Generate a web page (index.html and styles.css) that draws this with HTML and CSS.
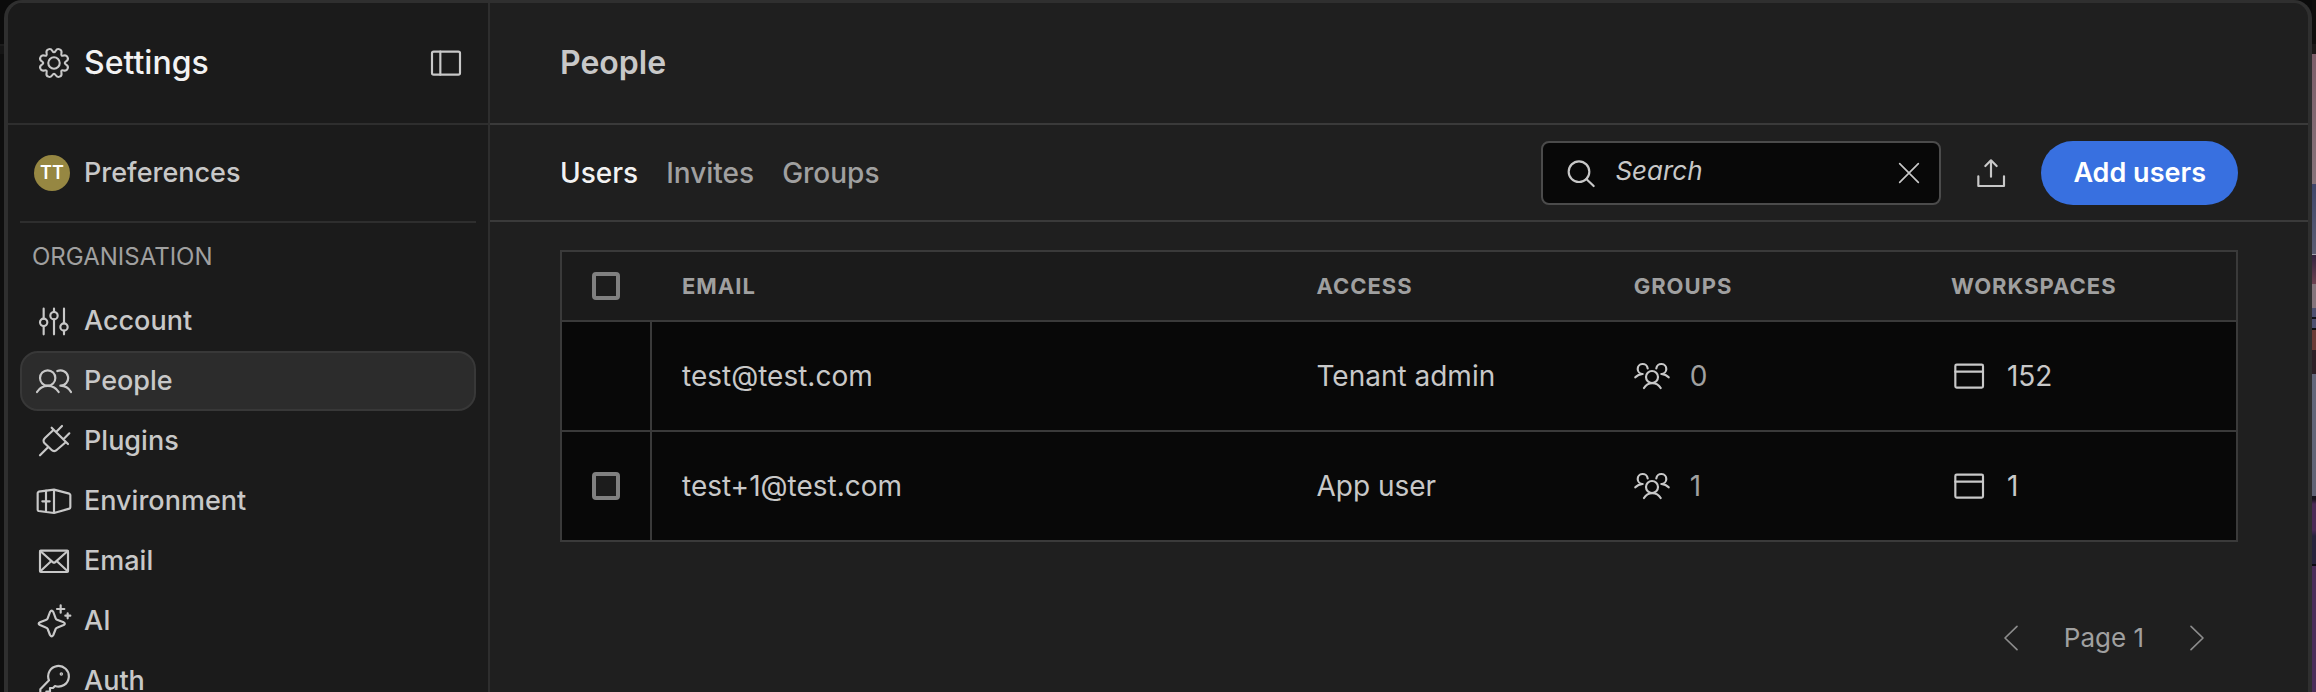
FILE: index.html
```html
<!DOCTYPE html>
<html lang="en">
<head>
<meta charset="utf-8">
<title>Settings - People</title>
<link rel="stylesheet" href="styles.css">
</head>
<body>
<svg class="sprite" aria-hidden="true">
  <symbol id="gear" viewBox="-18 -18 36 36">
    <g transform="scale(.94)"><path d="M-1.67-12.83Q0-10 1.67-12.83Q3.33-15.65 6.02-14.54Q8.71-13.42 7.89-10.25Q7.07-7.07 10.25-7.89Q13.42-8.71 14.54-6.02Q15.65-3.33 12.83-1.67Q10 0 12.83 1.67Q15.65 3.33 14.54 6.02Q13.42 8.71 10.25 7.89Q7.07 7.07 7.89 10.25Q8.71 13.42 6.02 14.54Q3.33 15.65 1.67 12.83Q0 10-1.67 12.83Q-3.33 15.65-6.02 14.54Q-8.71 13.42-7.89 10.25Q-7.07 7.07-10.25 7.89Q-13.42 8.71-14.54 6.02Q-15.65 3.33-12.83 1.67Q-10 0-12.83-1.67Q-15.65-3.33-14.54-6.02Q-13.42-8.71-10.25-7.89Q-7.07-7.07-7.89-10.25Q-8.71-13.42-6.02-14.54Q-3.33-15.65-1.67-12.83Z" stroke-width="2.2"/><circle r="6.1" stroke-width="2.2"/></g>
  </symbol>
  <symbol id="panel" viewBox="0 0 108 108"><rect x="12" y="20" width="84" height="69" rx="5"/><path d="M37 20v69"/></symbol>
  <symbol id="sliders" viewBox="0 0 108 108"><path d="M23 17v30M23 69v25M54 17v10M54 49v45M84 17v44M84 83v11"/><circle cx="23" cy="58" r="11"/><circle cx="54" cy="38" r="11"/><circle cx="84" cy="72" r="11"/></symbol>
  <symbol id="people" viewBox="0 0 108 108"><circle cx="35" cy="45" r="23"/><path d="M3 87a38 38 0 0 1 65 0M64 24a23 23 0 1 1 9 44a38 38 0 0 1 32 19"/></symbol>
  <symbol id="plug" viewBox="0 0 108 108"><path d="M12 97l24-24M47 14l49 49M53 20L26 46a10 10 0 0 0 0 15l21 20a10 10 0 0 0 15 0l28-24M78 9L61 26M100 31L83 48"/></symbol>
  <symbol id="env" viewBox="0 0 108 108"><path d="M5 30q0-3 3-4l46-6l46 12q3 1 3 4v37q0 3-3 4l-46 13l-46-6q-3-1-3-4zM54 20v70M30 23v64M19 55h22"/></symbol>
  <symbol id="mail" viewBox="0 0 108 108"><rect x="12" y="23" width="84" height="64" rx="3"/><path d="M13 24l38 34q3 2 6 0l38-34M13 85l33-31M95 85l-33-31"/></symbol>
  <symbol id="spark" viewBox="0 0 108 108"><path d="M42 27Q47 19 52 27L59 46Q60 49 63 50L83 58Q90 62 83 66L63 74Q60 75 59 78L52 96Q47 104 42 96L35 78Q34 75 31 74L12 66Q4 62 12 58L31 50Q34 49 35 46ZM74 7v22M63 18h22M95 31v15M88 38h15"/></symbol>
  <symbol id="key" viewBox="0 0 108 108"><path d="M39 52A31 31 0 1 1 57 69L51 75H42V86H31V98H13V79Z"/><circle cx="76" cy="33" r="2"/></symbol>
  <symbol id="group" viewBox="0 0 108 108"><circle cx="54" cy="57" r="18"/><path d="M30 90a29 29 0 0 1 50 0M67 31a15 15 0 1 1 15 17q14 1 22 10M41 31a15 15 0 1 0-15 17q-14 1-22 10"/></symbol>
  <symbol id="window" viewBox="0 0 108 108"><rect x="13" y="20" width="83" height="69" rx="4"/><path d="M13 41h83"/></symbol>
  <symbol id="upload" viewBox="0 0 108 108"><path d="M16 64v29h77V64M54 16v49M37 33l17-17l17 17"/></symbol>
  <symbol id="search" viewBox="0 0 108 108"><circle cx="48" cy="50" r="31"/><path d="M70 72l22 21"/></symbol>
  <symbol id="close" viewBox="0 0 108 108"><path d="M26 26l56 56M82 26l-56 56"/></symbol>
  <symbol id="prev" viewBox="0 0 108 108"><path d="M72 19L36 54l36 35"/></symbol>
  <symbol id="next" viewBox="0 0 108 108"><path d="M36 19l36 35l-36 35"/></symbol>
</svg>
<div class="backdrop">
  <div class="modal">
    <aside class="sidebar">
      <header class="sidebar-head">
        <svg class="icon"><use href="#gear"/></svg>
        <h2>Settings</h2>
        <button class="icon-button" aria-label="Collapse sidebar"><svg class="icon"><use href="#panel"/></svg></button>
      </header>
      <div class="profile">
        <a class="profile-link" href="#preferences"><span class="avatar">TT</span>Preferences</a>
      </div>
      <nav class="menu" aria-label="Organisation">
        <h3>ORGANISATION</h3>
        <a href="#account"><svg class="icon"><use href="#sliders"/></svg>Account</a>
        <a class="active" href="#people-page" aria-current="page"><svg class="icon"><use href="#people"/></svg>People</a>
        <a href="#plugins"><svg class="icon"><use href="#plug"/></svg>Plugins</a>
        <a href="#environment"><svg class="icon"><use href="#env"/></svg>Environment</a>
        <a href="#email"><svg class="icon"><use href="#mail"/></svg>Email</a>
        <a href="#ai"><svg class="icon"><use href="#spark"/></svg>AI</a>
        <a href="#auth"><svg class="icon"><use href="#key"/></svg>Auth</a>
      </nav>
    </aside>
    <main class="main">
      <header class="main-head"><h1>People</h1></header>
      <div class="toolbar">
        <nav class="tabs" aria-label="People sections">
          <a class="selected" href="#users">Users</a>
          <a href="#invites">Invites</a>
          <a href="#groups">Groups</a>
        </nav>
        <div class="search">
          <svg class="icon"><use href="#search"/></svg>
          <input type="text" placeholder="Search" aria-label="Search users">
          <button class="icon-button" aria-label="Clear search"><svg class="icon thin"><use href="#close"/></svg></button>
        </div>
        <button class="icon-button upload" aria-label="Import users"><svg class="icon"><use href="#upload"/></svg></button>
        <button class="primary">Add users</button>
      </div>
      <section class="content">
        <table>
          <colgroup><col class="col-check"><col class="col-email"><col class="col-data"><col class="col-data"><col></colgroup>
          <thead>
            <tr><th><input type="checkbox" aria-label="Select all users"></th><th>EMAIL</th><th>ACCESS</th><th>GROUPS</th><th>WORKSPACES</th></tr>
          </thead>
          <tbody>
            <tr>
              <td></td><td>test@test.com</td><td>Tenant admin</td>
              <td><span class="count muted"><svg class="icon"><use href="#group"/></svg>0</span></td>
              <td><span class="count"><svg class="icon"><use href="#window"/></svg>152</span></td>
            </tr>
            <tr>
              <td><input type="checkbox" aria-label="Select test+1@test.com"></td><td>test+1@test.com</td><td>App user</td>
              <td><span class="count muted"><svg class="icon"><use href="#group"/></svg>1</span></td>
              <td><span class="count"><svg class="icon"><use href="#window"/></svg>1</span></td>
            </tr>
          </tbody>
        </table>
        <div class="pagination">
          <button class="icon-button" aria-label="Previous page"><svg class="icon thin"><use href="#prev"/></svg></button>
          <span>Page 1</span>
          <button class="icon-button" aria-label="Next page"><svg class="icon thin"><use href="#next"/></svg></button>
        </div>
      </section>
    </main>
  </div>
</div>
</body>
</html>
```
FILE: styles.css
```css
* { box-sizing: border-box; }
body {
  margin: 0;
  background: #0d0d0d;
  color: #c8c8c8;
  font: 400 28px/36px Inter, "Liberation Sans", sans-serif;
}
h1, h2, h3 { margin: 0; }
a { color: inherit; text-decoration: none; }
button, input { font: inherit; color: inherit; }
button { border: 0; padding: 0; background: none; cursor: pointer; }
.sprite { display: none; }
.icon {
  display: block;
  flex: none;
  width: 36px;
  height: 36px;
  fill: none;
  stroke: #c8c8c8;
  stroke-width: 6.5;
  stroke-linecap: round;
  stroke-linejoin: round;
}
.icon.thin { stroke-width: 5; }
.icon-button { display: block; flex: none; }

/* Dimmed page behind the dialog */
.backdrop {
  display: flex;
  height: 100vh;
  overflow: hidden;
  padding: 0 4px;
  background:
    linear-gradient(#0f0e0d 44px, #1b1817 44px 54px, #7c5d68 54px, #867379 184px,
      #3f466a 184px, #5b5d72 254px, #a0a0a8 254px 255px, #33233f 255px, #6b4250 284px,
      #84747b 284px 308px, #4d5070 308px 317px, #101018 317px 319px, #4d5070 319px 328px,
      #0c0c10 328px 330px, #6a3b36 330px 350px, #2c2026 350px 374px, #62667a 374px, #606374 496px,
      #17131c 496px 499px, #4b2a56 504px 530px, #27233c 536px 564px, #0b0a10 564px 566px,
      #4a2c58 566px) right / 4px 100% no-repeat,
    linear-gradient(#0b0b0b 44px, #1c1c1c 44px 46px, #151515 46px 54px, #0e0e0e 54px);
}
.modal {
  display: flex;
  flex: 1;
  min-width: 0;
  overflow: hidden;
  border: solid #2f2f2f;
  border-width: 3px 4px 0;
  border-radius: 18px 18px 0 0;
  background: #1f1f1f;
}

.sidebar {
  flex: none;
  width: 482px;
  border-right: 2px solid #2e2e2e;
  background: #1b1b1b;
}
.sidebar-head {
  display: flex;
  align-items: center;
  gap: 12px;
  height: 122px;
  padding: 0 24px 0 28px;
  border-bottom: 2px solid #2e2e2e;
}
.sidebar-head h2 {
  flex: 1;
  color: #f2f2f2;
  font-size: 32px;
  font-weight: 500;
}
.profile {
  margin: 0 12px;
  padding: 30px 14px;
  border-bottom: 2px solid #2e2e2e;
}
.profile-link {
  display: flex;
  align-items: center;
  gap: 14px;
  font-size: 27px;
  font-weight: 500;
}
.avatar {
  width: 36px;
  height: 36px;
  border-radius: 50%;
  background: #968742;
  color: #fff;
  font-size: 18px;
  font-weight: 600;
  text-align: center;
}
.menu { padding: 16px 12px 0; }
.menu h3 {
  padding: 0 12px;
  margin-bottom: 16px;
  color: #a0a0a0;
  font-size: 24px;
  font-weight: 400;
}
.menu a {
  display: flex;
  align-items: center;
  gap: 12px;
  height: 60px;
  padding: 0 14px;
  border: 2px solid transparent;
  border-radius: 18px;
  font-size: 27px;
  font-weight: 500;
}
.menu .active { border-color: #383838; background: #2c2c2c; }

.main { flex: 1; min-width: 0; }
.main-head {
  display: flex;
  align-items: center;
  height: 122px;
  padding: 0 70px;
  border-bottom: 2px solid #3a3a3a;
}
.main-head h1 { font-size: 32px; font-weight: 600; }
.toolbar {
  display: flex;
  align-items: center;
  gap: 32px;
  padding: 16px 70px 15px;
  border-bottom: 2px solid #3a3a3a;
}
.tabs { display: flex; flex: 1; gap: 28px; color: #a0a0a0; font-weight: 500; }
.tabs .selected { color: #f2f2f2; }
.search {
  display: flex;
  align-items: center;
  gap: 16px;
  width: 400px;
  height: 64px;
  padding: 0 12px 0 20px;
  border: 2px solid #4b4b4b;
  border-radius: 8px;
  background: #080808;
}
.search input {
  flex: 1;
  min-width: 0;
  padding: 0 0 4px;
  border: 0;
  outline: 0;
  background: none;
  font-size: 26px;
  font-style: italic;
}
.search input::placeholder { color: #c8c8c8; opacity: 1; }
.primary {
  height: 64px;
  padding: 0 32px;
  border-radius: 32px;
  background: #3870e0;
  color: #fff;
  font-size: 27px;
  font-weight: 600;
}

.content { padding: 28px 70px; }
table {
  width: 100%;
  table-layout: fixed;
  border: 2px solid #3a3a3a;
  border-spacing: 0;
  background: #080808;
}
.col-check { width: 90px; }
.col-email { width: 37.9%; }
.col-data { width: 18.95%; }
th, td { padding: 0 30px; text-align: left; }
th {
  height: 68px;
  background: #1b1b1b;
  color: #a0a0a0;
  font-size: 22px;
  font-weight: 700;
  letter-spacing: 1px;
}
td { height: 110px; border-top: 2px solid #3a3a3a; }
td:first-child { border-right: 2px solid #3a3a3a; }
td:first-child, th:first-child { padding-right: 0; }
input[type="checkbox"] {
  appearance: none;
  display: block;
  width: 28px;
  height: 28px;
  margin: 0;
  border: 4px solid #808080;
  border-radius: 4px;
  background: #1c1c1c;
}
.count { display: flex; align-items: center; gap: 20px; }
.muted { color: #a0a0a0; }
.pagination {
  display: flex;
  align-items: center;
  justify-content: flex-end;
  gap: 35px;
  padding: 78px 23px 0;
  color: #a0a0a0;
  font-size: 26px;
}
.pagination .icon { stroke: #8c8c8c; }
```
